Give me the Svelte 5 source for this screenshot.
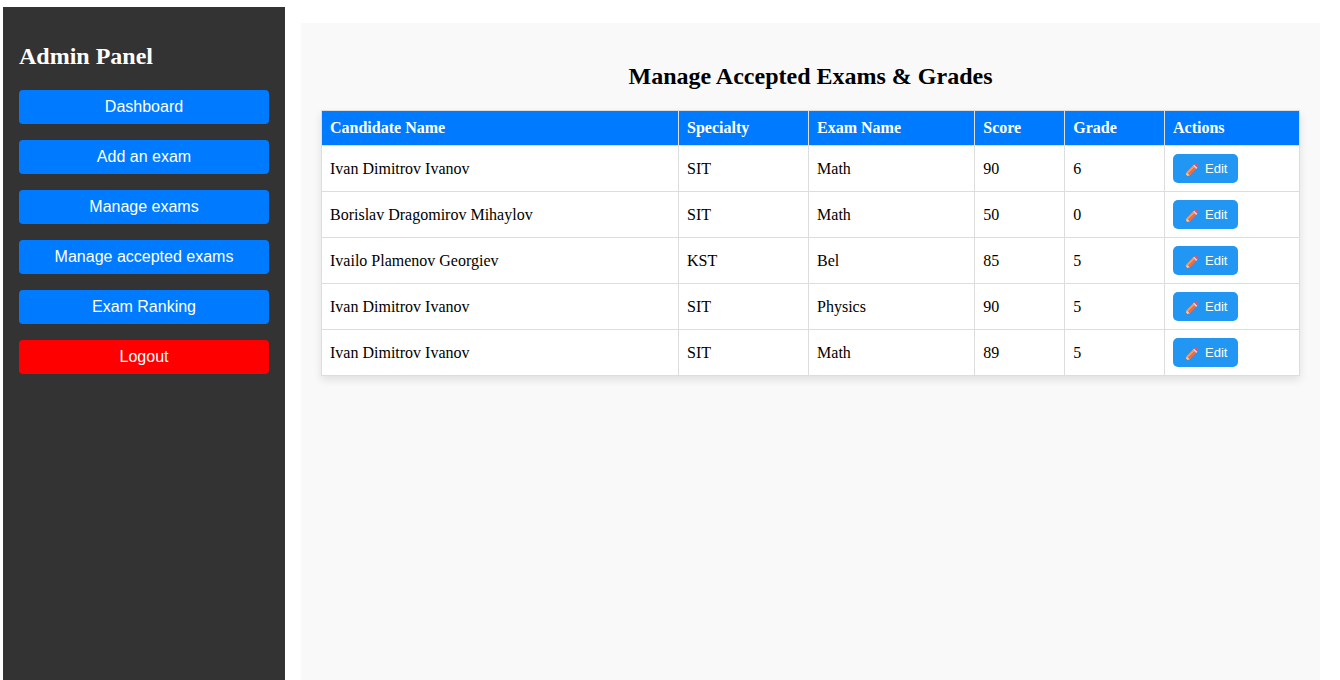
<script>
  const links = [
    'Dashboard',
    'Add an exam',
    'Manage exams',
    'Manage accepted exams',
    'Exam Ranking',
  ];

  const columns = [
    { label: 'Candidate Name', width: 36.5 },
    { label: 'Specialty', width: 13.3 },
    { label: 'Exam Name', width: 17 },
    { label: 'Score', width: 9.2 },
    { label: 'Grade', width: 10.2 },
    { label: 'Actions', width: 13.8 },
  ];

  const exams = [
    { name: 'Ivan Dimitrov Ivanov', specialty: 'SIT', exam: 'Math', score: 90, grade: 6 },
    { name: 'Borislav Dragomirov Mihaylov', specialty: 'SIT', exam: 'Math', score: 50, grade: 0 },
    { name: 'Ivailo Plamenov Georgiev', specialty: 'KST', exam: 'Bel', score: 85, grade: 5 },
    { name: 'Ivan Dimitrov Ivanov', specialty: 'SIT', exam: 'Physics', score: 90, grade: 5 },
    { name: 'Ivan Dimitrov Ivanov', specialty: 'SIT', exam: 'Math', score: 89, grade: 5 },
  ];
</script>

<div class="layout">
  <nav class="sidebar">
    <h2>Admin Panel</h2>
    {#each links as link}
      <button type="button" class="nav-button">{link}</button>
    {/each}
    <button type="button" class="nav-button logout">Logout</button>
  </nav>

  <main class="content">
    <h2>Manage Accepted Exams &amp; Grades</h2>
    <table>
      <colgroup>
        {#each columns as column}
          <col style="width: {column.width}%" />
        {/each}
      </colgroup>
      <thead>
        <tr>
          {#each columns as column}
            <th scope="col">{column.label}</th>
          {/each}
        </tr>
      </thead>
      <tbody>
        {#each exams as row}
          <tr>
            <td>{row.name}</td>
            <td>{row.specialty}</td>
            <td>{row.exam}</td>
            <td>{row.score}</td>
            <td>{row.grade}</td>
            <td>
              <button type="button" class="edit">
                <svg viewBox="0 0 14 14" width="14" height="14" aria-hidden="true">
                  <path d="M0.5 13.5 1.7 9 5 12.3Z" fill="#f3c29c" />
                  <path d="M0.5 13.5 0.9 11.9 2.1 13.1Z" fill="#4a3b40" />
                  <path d="M1.7 9 7.9 2.8 9.5 4.4 3.3 10.6Z" fill="#ff9658" />
                  <path d="M3.3 10.6 9.5 4.4 11.2 6.1 5 12.3Z" fill="#ee6a45" />
                  <path d="M7.9 2.8 9.2 1.5 12.5 4.8 11.2 6.1Z" fill="#d8cfe2" />
                  <path d="M9.2 1.5C10.2 0.5 11.7 0.5 12.6 1.4 13.5 2.3 13.5 3.8 12.5 4.8Z" fill="#f4505c" />
                </svg>
                <span>Edit</span>
              </button>
            </td>
          </tr>
        {/each}
      </tbody>
    </table>
  </main>
</div>

<style>
  :global(body) {
    background: #fff;
  }

  .layout {
    display: flex;
    box-sizing: border-box;
    min-height: 100vh;
    padding: 7px 20px 0 3px;
    font-family: 'Liberation Serif', 'Times New Roman', serif;
    font-size: 16px;
    color: #000;
  }

  h2 {
    margin: 20px 0;
    font-size: 24px;
    line-height: 27px;
  }

  .sidebar {
    display: flex;
    flex-direction: column;
    flex: none;
    gap: 16px;
    box-sizing: border-box;
    width: 282px;
    padding: 16px;
    background: #333;
    color: #fff;
  }

  .sidebar h2 {
    margin-bottom: 4px;
  }

  button {
    border: none;
    color: #fff;
    font-family: 'Liberation Sans', Arial, sans-serif;
    cursor: pointer;
  }

  .nav-button {
    padding: 8px;
    border-radius: 4px;
    background: #007bff;
    font-size: 16px;
    line-height: 18px;
  }

  .logout {
    background: #f00;
  }

  .content {
    flex: 1;
    min-width: 0;
    margin: 16px 0 0 16px;
    padding: 20px;
    background: #f9f9f9;
  }

  .content h2 {
    text-align: center;
  }

  table {
    width: 100%;
    table-layout: fixed;
    border-collapse: collapse;
    background: #fff;
    box-shadow: 0 4px 8px rgba(0, 0, 0, 0.1);
  }

  th,
  td {
    padding: 8px;
    border: 1px solid #ddd;
    text-align: left;
    line-height: 18px;
  }

  th {
    background: #007bff;
    color: #fff;
  }

  .edit {
    display: flex;
    align-items: center;
    gap: 6px;
    padding: 7px 11px 6px 12px;
    border-radius: 5px;
    background: #2196f3;
    font-size: 13px;
    line-height: 16px;
  }

  .edit svg {
    margin-top: 2px;
  }
</style>
